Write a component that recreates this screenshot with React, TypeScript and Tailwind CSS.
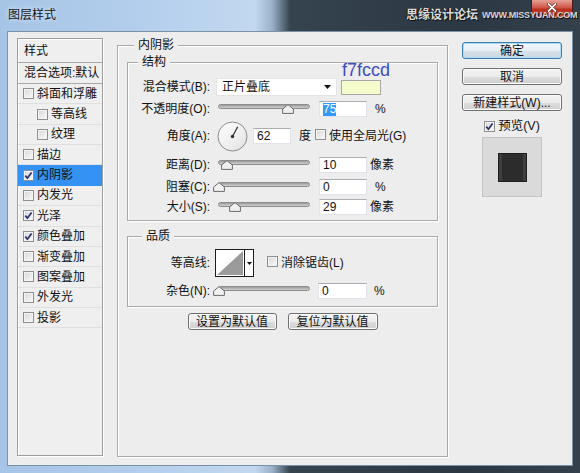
import React from 'react';

const FONT = "font-['Liberation_Sans','Noto_Sans_CJK_SC',sans-serif]";

function Check({ checked = false }: { checked?: boolean }) {
  return (
    <span className="inline-flex w-[11px] h-[11px] shrink-0 items-center justify-center border border-[#8e8f8f] bg-[linear-gradient(135deg,#d6d6d6,#fbfbfb)] shadow-[inset_0_0_0_1px_#f4f4f4]">
      {checked && (
        <svg width="9" height="9" viewBox="0 0 9 9">
          <path d="M1.3 4.6 L3.4 7.2 L7.6 1.4" fill="none" stroke="#27306a" strokeWidth="1.7" />
        </svg>
      )}
    </span>
  );
}

function Slider({ pos }: { pos: number }) {
  return (
    <div className="relative w-[92px] h-[14px] shrink-0">
      <div className="absolute left-0 right-0 top-[2px] h-[5px] rounded-full border border-[#8c8c8c] bg-[linear-gradient(#9a9a9a,#d2d2d2)]" />
      <svg className="absolute top-[2px]" style={{ left: pos - 6 }} width="12" height="10" viewBox="0 0 12 10">
        <path d="M6 0.6 L11.4 5 L11.4 9.4 L0.6 9.4 L0.6 5 Z" fill="#f0f0f0" stroke="#6a6a6a" strokeWidth="1" />
      </svg>
    </div>
  );
}

const inputCls =
  'h-[16px] shrink-0 bg-white border border-[#e2e3ea] border-t-[#abadb3] flex items-center pl-[3px] text-[12px] leading-none text-[#111]';

const btnCls =
  'h-[17px] rounded-[3px] border border-[#707070] bg-[linear-gradient(#f4f4f4_0%,#ebebeb_50%,#dddddd_51%,#cfcfcf_100%)] shadow-[inset_0_0_0_1px_#fbfbfb] flex items-center justify-center text-[12px] leading-none text-[#111] whitespace-nowrap';

const groupCls =
  'border border-[#a9a9a9] shadow-[1px_1px_0_#ffffff,inset_1px_1px_0_#ffffff]';

const items: { label: string; indent?: boolean; checked?: boolean; selected?: boolean }[] = [
  { label: '斜面和浮雕' },
  { label: '等高线', indent: true },
  { label: '纹理', indent: true },
  { label: '描边' },
  { label: '内阴影', checked: true, selected: true },
  { label: '内发光' },
  { label: '光泽', checked: true },
  { label: '颜色叠加', checked: true },
  { label: '渐变叠加' },
  { label: '图案叠加' },
  { label: '外发光' },
  { label: '投影' },
];

function Label({ children }: { children: React.ReactNode }) {
  return <div className="w-[82px] shrink-0 text-right whitespace-nowrap leading-none">{children}</div>;
}

export default function App() {
  return (
    <div
      className={`${FONT} relative w-[580px] h-[473px] overflow-hidden text-[12px] text-[#111] bg-[linear-gradient(90deg,#a6c4e6_0%,#b7d1ee_30%,#c2d8ef_44%,#97afc7_47%,#36444f_50%,#2b3743_80%,#34404b_100%)]`}
    >
      {/* Title bar */}
      <div className="h-[31px] flex items-start pl-[8px]">
        <span className="mt-[8px] leading-[14px] text-[12px] text-[#141414] [text-shadow:0_0_5px_#eef5fc]">图层样式</span>
        <div className="ml-auto mr-[7px] w-[42px] h-[18px] rounded-b-[4px] border border-t-0 border-[#4a1c17] bg-[linear-gradient(#e6a296,#cf5446_45%,#b7301f_55%,#c7493a)] flex items-start justify-center pt-[3px]">
          <svg width="10" height="9" viewBox="0 0 10 9">
            <path d="M1.5 1 L8.5 8 M8.5 1 L1.5 8" stroke="#3a0a05" strokeWidth="3" strokeLinecap="round" />
            <path d="M1.5 1 L8.5 8 M8.5 1 L1.5 8" stroke="#ffffff" strokeWidth="1.8" strokeLinecap="round" />
          </svg>
        </div>
      </div>
      {/* watermark overlay */}
      <div className="absolute left-[406px] top-[8px] flex items-end gap-[4px] whitespace-nowrap pointer-events-none">
        <span className="text-[12px] font-bold leading-[14px] text-[#d9d9d9] [text-shadow:1px_1px_0_#111,-1px_0_0_#111]">思缘设计论坛</span>
        <span className="text-[9px] font-bold leading-[9px] mb-[2px] text-[#d6d6d6] tracking-[-0.2px] [text-shadow:1px_1px_0_#111]">WWW.MISSYUAN.COM</span>
      </div>

      {/* Client area */}
      <div className="mx-[7px] h-[435px] border border-[#7d91a6] bg-[#ededed] flex items-start pl-[9px] pt-[6px]">
        {/* Left list */}
        <div className="w-[86px] h-[418px] shrink-0 border border-[#9e9e9e] shadow-[1px_1px_0_#ffffff,inset_1px_1px_0_#ffffff] bg-[#efefef] flex flex-col">
          <div className="h-[24px] shrink-0 border-b border-[#a8a8a8] pl-[6px] flex items-center">样式</div>
          <div className="h-[21px] shrink-0 border-b border-[#a8a8a8] pl-[6px] flex items-center whitespace-nowrap overflow-hidden">混合选项:默认</div>
          {items.map((it) => (
            <div
              key={it.label}
              className={`h-[20.36px] shrink-0 flex items-center gap-[3px] border-b whitespace-nowrap ${
                it.selected ? 'bg-[#3492f4] border-[#3492f4]' : 'border-[#e0e0e0]'
              } ${it.indent ? 'pl-[19px]' : 'pl-[5px]'}`}
            >
              <Check checked={it.checked} />
              <span className="leading-none">{it.label}</span>
            </div>
          ))}
        </div>

        {/* Main group: 内阴影 */}
        <div className={`${groupCls} ml-[14px] mt-[7px] w-[331px] h-[412px] shrink-0 flex flex-col`}>
          <div className="-mt-[8px] ml-[16px] px-[4px] h-[14px] leading-[14px] bg-[#ededed] w-fit">内阴影</div>

          {/* 结构 */}
          <div className={`${groupCls} mx-[9px] mt-[10px] pb-[5px] flex flex-col`}>
            <div className="-mt-[8px] ml-[10px] px-[4px] h-[14px] leading-[14px] bg-[#ededed] w-fit">结构</div>

            <div className="mt-[9px] h-[18px] flex items-center">
              <Label>混合模式(B):</Label>
              <div className="ml-[6px] w-[121px] h-[18px] bg-white border border-[#e4e4e4] flex items-center pl-[5px] pr-[5px]">
                <span className="leading-none">正片叠底</span>
                <svg className="ml-auto" width="7" height="4" viewBox="0 0 7 4">
                  <path d="M0 0 L7 0 L3.5 4 Z" fill="#111" />
                </svg>
              </div>
              <div className="relative ml-[4px] w-[40px] h-[15px] bg-[#f7fccd] border border-[#a8a8a8]">
                <span className="absolute left-0 bottom-full mb-[2px] text-[18px] leading-none text-[#3d4fbf] font-['Liberation_Sans',sans-serif]">
                  f7fccd
                </span>
              </div>
            </div>

            <div className="mt-[4px] h-[18px] flex items-center">
              <Label>不透明度(O):</Label>
              <div className="ml-[8px]"><Slider pos={70} /></div>
              <div className={`${inputCls} ml-[9px] w-[48px]`}>
                <span className="bg-[#3399ff] text-white h-[13px] leading-[13px]">75</span>
              </div>
              <span className="ml-[8px] leading-none">%</span>
            </div>

            <div className="mt-[3px] h-[30px] flex items-center">
              <Label>角度(A):</Label>
              <svg className="ml-[7px] shrink-0" width="31" height="31" viewBox="0 0 31 31">
                <defs>
                  <linearGradient id="dialg" x1="0" y1="0" x2="1" y2="1">
                    <stop offset="0" stopColor="#ffffff" />
                    <stop offset="1" stopColor="#e2e2e2" />
                  </linearGradient>
                </defs>
                <circle cx="15.5" cy="15.5" r="14.5" fill="url(#dialg)" stroke="#8a8a8a" />
                <line x1="15.5" y1="15.5" x2="20.7" y2="5.8" stroke="#2d2d2d" strokeWidth="1.2" />
                <circle cx="15.5" cy="15.5" r="1.7" fill="#2d2d2d" />
              </svg>
              <div className={`${inputCls} ml-[5px] w-[38px]`}>62</div>
              <span className="ml-[8px] leading-none">度</span>
              <span className="ml-[4px]"><Check /></span>
              <span className="ml-[3px] leading-none whitespace-nowrap">使用全局光(G)</span>
            </div>

            <div className="mt-[6px] h-[16px] flex items-center">
              <Label>距离(D):</Label>
              <div className="ml-[8px]"><Slider pos={9} /></div>
              <div className={`${inputCls} ml-[9px] w-[48px]`}>10</div>
              <span className="ml-[3px] leading-none">像素</span>
            </div>

            <div className="mt-[6px] h-[16px] flex items-center">
              <Label>阻塞(C):</Label>
              <div className="ml-[8px]"><Slider pos={1} /></div>
              <div className={`${inputCls} ml-[9px] w-[48px]`}>0</div>
              <span className="ml-[8px] leading-none">%</span>
            </div>

            <div className="mt-[4px] h-[16px] flex items-center">
              <Label>大小(S):</Label>
              <div className="ml-[8px]"><Slider pos={17} /></div>
              <div className={`${inputCls} ml-[9px] w-[48px]`}>29</div>
              <span className="ml-[3px] leading-none">像素</span>
            </div>
          </div>

          {/* 品质 */}
          <div className={`${groupCls} mx-[9px] mt-[15px] pb-[7px] flex flex-col`}>
            <div className="-mt-[8px] ml-[14px] px-[4px] h-[14px] leading-[14px] bg-[#ededed] w-fit">品质</div>

            <div className="mt-[6px] h-[28px] flex items-center">
              <Label>等高线:</Label>
              <div className="ml-[5px] w-[39px] h-[28px] shrink-0 border border-[#1d1d1d] bg-white flex">
                <svg width="28" height="26" viewBox="0 0 28 26">
                  <polygon points="1,25 27,1 27,25" fill="#9b9b9b" />
                </svg>
                <div className="w-[9px] border-l border-[#1d1d1d] flex items-center justify-center">
                  <svg width="5" height="3" viewBox="0 0 5 3">
                    <path d="M0 0 L5 0 L2.5 3 Z" fill="#111" />
                  </svg>
                </div>
              </div>
              <span className="ml-[13px]"><Check /></span>
              <span className="ml-[3px] leading-none whitespace-nowrap">消除锯齿(L)</span>
            </div>

            <div className="mt-[6px] h-[16px] flex items-center">
              <Label>杂色(N):</Label>
              <div className="ml-[8px]"><Slider pos={1} /></div>
              <div className={`${inputCls} ml-[8px] w-[49px]`}>0</div>
              <span className="ml-[7px] leading-none">%</span>
            </div>
          </div>

          <div className="mt-[6px] flex justify-center gap-[11px]">
            <div className={`${btnCls} w-[89px]`}>设置为默认值</div>
            <div className={`${btnCls} w-[90px]`}>复位为默认值</div>
          </div>
        </div>

        {/* Right column */}
        <div className="ml-[14px] mt-[4px] w-[100px] shrink-0 flex flex-col items-center">
          <div className="w-[100px] h-[17px] rounded-[3px] border border-[#3c7fb1] bg-[linear-gradient(#f2f7fb_0%,#e6eef4_50%,#d6e2ea_51%,#cad7e0_100%)] shadow-[inset_0_0_0_1px_#a6dcf6] flex items-center justify-center leading-none">
            确定
          </div>
          <div className={`${btnCls} mt-[9px] w-[100px]`}>取消</div>
          <div className={`${btnCls} mt-[9px] w-[100px]`}>新建样式(W)...</div>
          <div className="mt-[8px] h-[14px] flex items-center gap-[3px]">
            <Check checked />
            <span className="leading-none text-[12.5px]">预览(V)</span>
          </div>
          <div className="mt-[4px] w-[60px] h-[60px] border border-[#c4c4c4] bg-[#dadada] flex items-center justify-center">
            <div className="w-[29px] h-[29px] bg-[#2c2c2c] shadow-[inset_0_0_0_1px_#1e1e1e,inset_4px_0_0_#3e3e3e,inset_-4px_0_0_#3e3e3e]" />
          </div>
        </div>
      </div>
    </div>
  );
}
